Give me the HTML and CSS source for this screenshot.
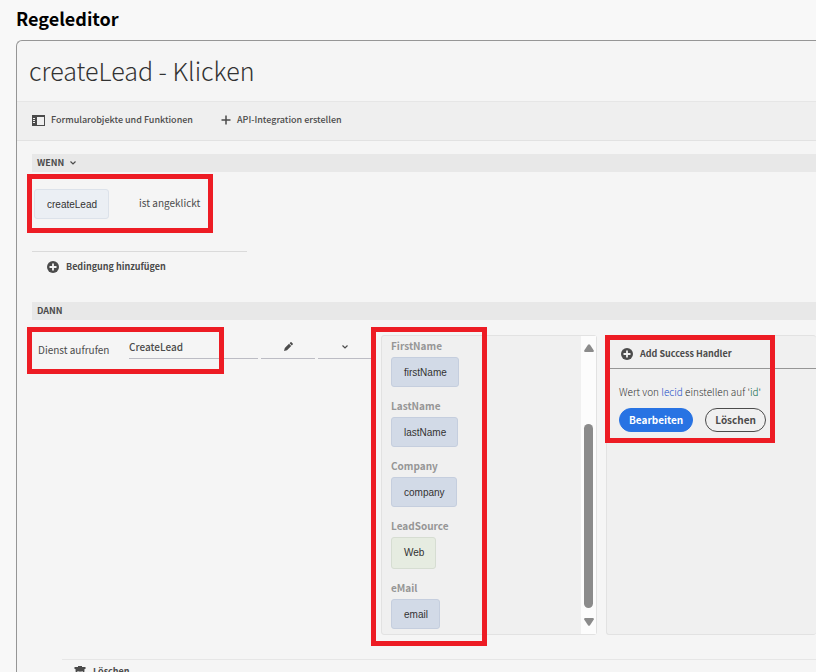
FILE: index.html
```html
<!DOCTYPE html>
<html lang="de">
<head>
<meta charset="utf-8">
<title>Regeleditor</title>
<link rel="stylesheet" href="styles.css">
</head>
<body>
<h1 class="page-title">Regeleditor</h1>
<main class="editor">
  <h2 class="rule-name">createLead - Klicken</h2>
  <div class="toolbar">
    <button class="tool" type="button">
      <svg width="13" height="11" viewBox="0 0 13 11"><path fill="#4b4b4b" fill-rule="evenodd" d="M0 0h13v11H0zM5 2v8h7V2zM1 3v1h2V3zM1 5v1h2V5zM1 7v1h2V7z"/></svg>
      Formularobjekte und Funktionen
    </button>
    <button class="tool" type="button">
      <svg width="10" height="10" viewBox="0 0 10 10"><path fill="none" stroke="#4b4b4b" stroke-width="1.5" d="M5 .5v9M.5 5h9"/></svg>
      API-Integration erstellen
    </button>
  </div>
  <div class="rule">
    <section>
      <h3 class="bar">WENN
        <svg width="6" height="4" viewBox="0 0 6 4"><path fill="none" stroke="#4b4b4b" stroke-width="1.2" d="M.5.5 3 3 5.5.5"/></svg>
      </h3>
      <div class="condition">
        <span class="chip chip-pale">createLead</span>
        <span class="event">ist angeklickt</span>
        <i class="mark mark-condition"></i>
      </div>
      <button class="add add-condition" type="button">
        <svg width="12" height="12" viewBox="0 0 12 12"><circle cx="6" cy="6" r="6" fill="#4b4b4b"/><path stroke="#f5f5f5" stroke-width="1.8" d="M6 2.5v7M2.5 6h7"/></svg>
        Bedingung hinzufügen
      </button>
    </section>
    <section>
      <h3 class="bar">DANN</h3>
      <div class="action">
        <div class="service">
          <label class="service-label" for="service">Dienst aufrufen</label>
          <input class="service-input" id="service" type="text" value="CreateLead">
          <button class="pick" type="button" aria-label="Bearbeiten">
            <svg width="9" height="9" viewBox="0 0 9 9"><path fill="#4b4b4b" d="M0 9 .8 6 5 1.8 7.2 4 3 8.2zM5.6 1.2 6.5.3a.8.8 0 0 1 1 0l1.2 1.2a.7.7 0 0 1 0 1L7.8 3.4z"/></svg>
          </button>
          <button class="pick" type="button" aria-label="Auswählen">
            <svg width="6" height="4" viewBox="0 0 6 4"><path fill="none" stroke="#4b4b4b" stroke-width="1.2" d="M.5.5 3 3 5.5.5"/></svg>
          </button>
          <i class="mark mark-service"></i>
        </div>
        <div class="inputs">
          <dl class="fields">
            <dt>FirstName</dt><dd><span class="chip">firstName</span></dd>
            <dt>LastName</dt><dd><span class="chip">lastName</span></dd>
            <dt>Company</dt><dd><span class="chip">company</span></dd>
            <dt>LeadSource</dt><dd><span class="chip chip-literal">Web</span></dd>
            <dt>eMail</dt><dd><span class="chip">email</span></dd>
          </dl>
          <div class="scrollbar">
            <svg width="10" height="8" viewBox="0 0 10 8"><path fill="#8b8b8b" d="M4 .8Q5-.4 6 .8L9.8 6.500Q10 8 9 8H1Q0 8 .2 6.500z"/></svg>
            <span class="thumb"></span>
            <svg width="10" height="8" viewBox="0 0 10 8"><path fill="#8b8b8b" d="M4 7.200Q5 8.400 6 7.200L9.800 1.500Q10 0 9 0H1Q0 0 .2 1.500z"/></svg>
          </div>
          <i class="mark mark-inputs"></i>
        </div>
        <div class="handler">
          <button class="add add-handler" type="button">
            <svg width="12" height="12" viewBox="0 0 12 12"><circle cx="6" cy="6" r="6" fill="#4b4b4b"/><path stroke="#f0f0f0" stroke-width="1.8" d="M6 2.500v7M2.500 6h7"/></svg>
            Add Success Handler
          </button>
          <p class="statement">Wert von <span class="object">lecid</span> einstellen auf '<span class="literal">id</span>'</p>
          <div class="handler-actions">
            <button class="pill pill-primary" type="button">Bearbeiten</button>
            <button class="pill" type="button">Löschen</button>
          </div>
          <i class="mark mark-handler"></i>
        </div>
      </div>
    </section>
    <footer class="statement-footer">
      <button class="add" type="button">
        <svg width="12" height="13" viewBox="0 0 12 13"><path fill="#4b4b4b" fill-rule="evenodd" d="M4 0h4v1h3.500v2H.5V1H4zM1.500 3h9L10 13H2zM3.500 5l.3 7h.8V5zM5.600 5v7h.8V5zM7.500 5v7h.8l.3-7z"/></svg>
        Löschen
      </button>
    </footer>
  </div>
</main>
</body>
</html>
```
FILE: styles.css
```css
* {
  box-sizing: border-box;
}

html,
body {
  height: 100%;
}

body {
  margin: 0;
  display: flex;
  flex-direction: column;
  overflow: hidden;
  background: #f8f8f8;
  color: #4b4b4b;
  font-family: "Noto Sans CJK JP", "Open Sans", sans-serif;
  font-size: 10px;
  line-height: 16px;
}

h1, h2, h3, p, dl, dd {
  margin: 0;
}

button,
input {
  font: inherit;
  color: inherit;
  background: none;
  border: 0;
  padding: 0;
}

svg {
  display: block;
  flex: none;
}

.page-title {
  padding: 6px 16px 10px;
  color: #000;
  font-size: 18px;
  line-height: 24px;
}

.editor {
  flex: 1 0 auto;
  margin-left: 16px;
  border: solid #969696;
  border-width: 1px 0 0 1px;
  border-top-left-radius: 6px;
  background: #f5f5f5;
}

.rule-name {
  padding: 9px 12px 11px;
  color: #323232;
  font-size: 25px;
  font-weight: 300;
  line-height: 40px;
}

.toolbar {
  display: flex;
  gap: 28px;
  height: 40px;
  padding: 0 15px;
  background: #efefef;
  border-top: 1px solid #e6e6e6;
  border-bottom: 1px solid #e2e2e2;
}

.tool {
  display: flex;
  align-items: center;
  gap: 6px;
  height: 36px;
  font-weight: 500;
  font-size: 9px;
}

.rule {
  padding: 13px 0 0 15px;
}

.bar {
  display: flex;
  align-items: center;
  gap: 6px;
  height: 18px;
  padding: 0 5px;
  background: #e8e8e8;
  font-size: 9px;
  font-weight: bold;
}

.mark {
  position: absolute;
  border: 5px solid #ed1c24;
  pointer-events: none;
}

.condition {
  position: relative;
  display: flex;
  align-items: flex-start;
  gap: 30px;
  padding: 17px 2px 32px;
}

.event {
  padding-top: 6px;
}

.mark-condition {
  left: -5px;
  top: 2px;
  width: 186px;
  height: 59px;
}

.chip {
  display: inline-block;
  padding: 8px 11px 6px 12px;
  border: 1px solid #c5cede;
  border-radius: 3px;
  background: #d2dae7;
  color: #323232;
  font: 10px/14px "Liberation Sans", sans-serif;
}

.chip-pale {
  background: #ebeff4;
  border-color: #dce2ea;
}

.chip-literal {
  padding-bottom: 8px;
  background: #e6ece1;
  border-color: #d6ddd2;
}

.add {
  display: flex;
  align-items: center;
  gap: 7px;
  font-size: 9px;
  font-weight: bold;
}

.add-condition {
  width: 215px;
  height: 30px;
  margin-bottom: 21px;
  padding-left: 15px;
  border-top: 1px solid #dadada;
}

.action {
  display: flex;
  align-items: flex-start;
  gap: 9px;
  padding-top: 15px;
}

.service {
  position: relative;
  display: flex;
  flex: none;
  width: 340px;
  gap: 3px;
  padding-left: 6px;
}

.service-label {
  width: 88px;
  padding-top: 7px;
}

.service-input {
  width: 129px;
  height: 24px;
  border-bottom: 1px solid #bcbcc4;
  font-weight: 500;
}

.pick {
  display: flex;
  align-items: center;
  justify-content: center;
  width: 54px;
  height: 24px;
  border-bottom: 1px solid #bcbcc4;
}

.mark-service {
  left: -5px;
  top: -8px;
  width: 197px;
  height: 47px;
}

.inputs,
.handler {
  position: relative;
  height: 300px;
  border: 1px solid #e2e2e2;
  border-radius: 3px;
  background: #f0f0f0;
}

.inputs {
  display: flex;
  flex: none;
  width: 216px;
}

.fields {
  flex: 1;
  padding: 2px 9px;
}

.fields dt {
  color: #969696;
  font-weight: bold;
  line-height: 16px;
  padding-bottom: 3px;
}

.fields dd {
  display: flex;
  padding-bottom: 11px;
}

.scrollbar {
  display: flex;
  flex-direction: column;
  align-items: center;
  justify-content: space-between;
  width: 15px;
  padding: 8px 0;
  background: #fcfcfc;
}

.thumb {
  width: 9px;
  height: 184px;
  margin: auto 0 10px;
  border-radius: 5px;
  background: #8b8b8b;
}

.mark-inputs {
  left: -11px;
  top: -9px;
  width: 116px;
  height: 319px;
}

.handler {
  flex: 1;
  min-width: 210px;
  border-right: 0;
}

.add-handler {
  width: 100%;
  height: 33px;
  padding: 3px 14px 0;
  border-bottom: 1px solid #969696;
}

.statement {
  padding: 15px 12px 8px;
  color: #323232;
  font-weight: 300;
}

.object {
  color: #1a4fc8;
}

.literal {
  color: #0a6b4b;
}

.handler-actions {
  display: flex;
  gap: 12px;
  padding-left: 12px;
}

.pill {
  height: 24px;
  padding: 0 9px;
  border: 1px solid #4b4b4b;
  border-radius: 12px;
  font-weight: bold;
}

.pill-primary {
  background: #2873e3;
  border-color: #2873e3;
  color: #fff;
}

.mark-handler {
  left: -2px;
  top: -1px;
  width: 170px;
  height: 108px;
}

.statement-footer {
  margin: 24px 0 0 30px;
  padding: 4px 12px;
  border-top: 1px solid #e6e6e6;
}
```
